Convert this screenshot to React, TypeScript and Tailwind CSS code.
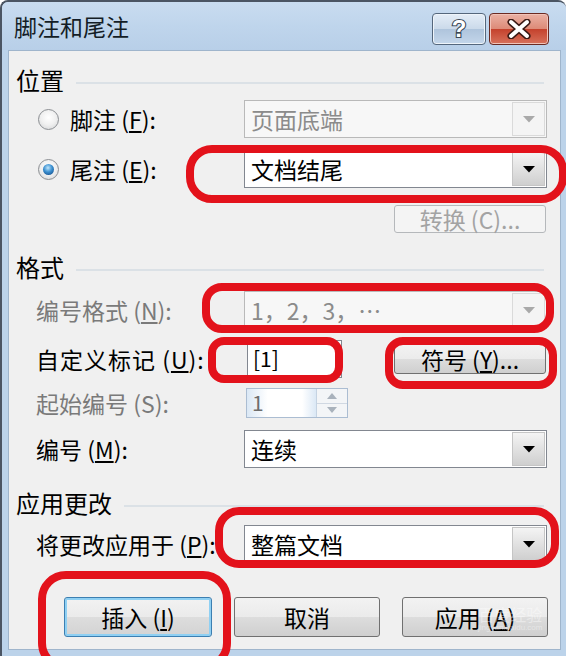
import React from "react";

const FONT = "font-['Noto_Sans_CJK_SC','Noto_Sans',sans-serif]";

function Arrow({ disabled }: { disabled?: boolean }) {
  return (
    <svg width="14" height="8" viewBox="0 0 14 8">
      <path d="M1 1h12L7 7.5z" fill={disabled ? "#a9a9a9" : "#000"} />
    </svg>
  );
}

function Combo({ text, disabled }: { text: string; disabled?: boolean }) {
  return (
    <div
      className={
        "ml-auto mr-[13px] flex h-full w-[303px] border " +
        (disabled ? "border-[#b9b9b9] bg-[#f7f7f7]" : "border-[#828790] bg-white")
      }
    >
      <div
        className={
          "flex flex-1 items-center pl-[6px] text-[23px] " +
          (disabled ? "text-[#8b8b8b]" : "text-black")
        }
      >
        {text}
      </div>
      <div
        className={
          "m-[1px] flex w-[33px] items-center justify-center " +
          (disabled
            ? "border border-[#dadada] bg-[#f4f4f4]"
            : "border border-[#c5c5c5] bg-gradient-to-b from-[#f4f4f4] to-[#cfcfcf]")
        }
      >
        <Arrow disabled={disabled} />
      </div>
    </div>
  );
}

function Heading({ text, lineClass }: { text: string; lineClass: string }) {
  return (
    <div className="flex h-[32px] items-center pl-[7px] pr-[16px]">
      <span className="text-[24px] leading-none text-black">{text}</span>
      <div className={"mt-[5px] h-[2px] flex-1 bg-[#dbe1e6] " + lineClass} />
    </div>
  );
}

function Radio({ checked }: { checked?: boolean }) {
  return (
    <div className="flex h-[21px] w-[21px] items-center justify-center rounded-full border border-[#8c8f93] bg-[radial-gradient(circle_at_50%_40%,#ffffff_0%,#f0f0f0_50%,#cfd1d3_100%)]">
      {checked && (
        <div className="h-[11px] w-[11px] rounded-full bg-[radial-gradient(circle_at_45%_35%,#bfe6fb_0%,#3a8fd0_45%,#0f3f7a_100%)]" />
      )}
    </div>
  );
}

function Btn({
  children,
  className,
  def,
  disabled,
}: {
  children: React.ReactNode;
  className: string;
  def?: boolean;
  disabled?: boolean;
}) {
  let look =
    "border-[#707070] bg-[linear-gradient(#f2f2f2_0%,#ebebeb_49%,#dddddd_50%,#cfcfcf_100%)] text-black";
  if (def)
    look =
      "border-[#3c7fb1] bg-[linear-gradient(#f2f2f2_0%,#ebebeb_49%,#dddddd_50%,#d3d3d3_100%)] shadow-[inset_0_0_0_2px_#8fd0f3] text-black";
  if (disabled) look = "border-[#b5b8bb] bg-[#f4f4f4] text-[#a3a3a3]";
  return (
    <div
      className={
        "flex items-center justify-center rounded-[3px] border text-[23px] " + look + " " + className
      }
    >
      {children}
    </div>
  );
}

export default function App() {
  return (
    <div
      className={
        "relative h-[656px] w-[566px] overflow-hidden rounded-tl-[8px] rounded-tr-[8px] border-l-[2px] border-t-[2px] border-[#4b5563] bg-[#bcd3ea] " +
        FONT
      }
    >
      {/* title bar */}
      <div className="relative flex h-[48px] items-center bg-gradient-to-b from-[#c9dcf0] via-[#bfd5ec] to-[#b8cfe8] pl-[12px]">
        <span className="text-[23px] text-[#141d26]">脚注和尾注</span>
        <div className="absolute left-[430px] top-[11px] flex h-[32px] w-[54px] items-center justify-center rounded-[4px] border border-[#55677c] bg-[linear-gradient(#e4edf7_0%,#cbdaea_49%,#aec4dc_50%,#c4d6ea_100%)] shadow-[inset_0_0_0_1px_#eef4fa]">
          <svg width="30" height="26" viewBox="0 0 30 26">
            <text
              x="15"
              y="21"
              textAnchor="middle"
              fontSize="24"
              fontWeight="bold"
              fontFamily="Liberation Sans, sans-serif"
              fill="#fff"
              stroke="#3a4856"
              strokeWidth="2.2"
              paintOrder="stroke"
            >
              ?
            </text>
          </svg>
        </div>
        <div className="absolute left-[487px] top-[11px] flex h-[32px] w-[60px] items-center justify-center rounded-[4px] border border-[#6b2a22] bg-[linear-gradient(#eab1a4_0%,#dd8b78_49%,#c4412c_50%,#d7715b_100%)] shadow-[inset_0_0_0_1px_#f1c3b8]">
          <svg width="26" height="20" viewBox="0 0 26 20">
            <path
              d="M5 3 L21 17 M21 3 L5 17"
              stroke="#3b1a15"
              strokeWidth="7"
              strokeLinecap="round"
            />
            <path
              d="M5 3 L21 17 M21 3 L5 17"
              stroke="#ffffff"
              strokeWidth="4"
              strokeLinecap="round"
            />
          </svg>
        </div>
      </div>

      {/* body */}
      <div className="flex h-[600px]">
        <div className="w-[6px]" />
        <div className="flex flex-1 flex-col border border-[#9fb5cc] bg-[#f0f0f0] pt-[13px] text-black">
          <Heading text="位置" lineClass="ml-[12px]" />

          <div className="mt-[4px] flex h-[38px] items-center pl-[29px]">
            <Radio />
            <span className="ml-[11px] text-[23px]">
              脚注 (<span className="underline">F</span>):
            </span>
            <Combo text="页面底端" disabled />
          </div>

          <div className="mt-[12px] flex h-[38px] items-center pl-[29px]">
            <Radio checked />
            <span className="ml-[11px] text-[23px]">
              尾注 (<span className="underline">E</span>):
            </span>
            <Combo text="文档结尾" />
          </div>

          <div className="mt-[17px] flex h-[28px] justify-end pr-[14px]">
            <Btn disabled className="w-[152px]">
              转换 (C)...
            </Btn>
          </div>

          <div className="mt-[18px]">
            <Heading text="格式" lineClass="ml-[12px]" />
          </div>

          <div className="mt-[8px] flex h-[38px] items-center pl-[27px]">
            <span className="text-[23px] text-[#7a7a7a]">
              编号格式 (<span className="underline">N</span>):
            </span>
            <Combo text="1，2，3，…" disabled />
          </div>

          <div className="mt-[11px] flex h-[38px] items-center pl-[27px]">
            <span className="text-[23px] tracking-[1px]">
              自定义标记 (<span className="underline">U</span>):
            </span>
            <div className="ml-auto flex h-full w-[95px] items-center border border-[#828790] bg-white pl-[5px] text-[21px]">
              [1]
            </div>
            <Btn className="ml-[52px] mr-[14px] h-[30px] w-[152px]">
              符号 (<span className="underline">Y</span>)...
            </Btn>
          </div>

          <div className="mt-[10px] flex h-[30px] items-center pl-[27px]">
            <span className="text-[23px] text-[#7a7a7a]">起始编号 (S):</span>
            <div className="ml-auto mr-[212px] flex h-full w-[102px] border border-[#abbdd2] bg-white">
              <div className="flex flex-1 items-center border-r border-[#c5d3e2] bg-[linear-gradient(90deg,#dbe8f5_0%,#ffffff_30%,#ffffff_80%,#dbe8f5_100%)] pl-[5px] text-[21px] text-[#6d6d6d]">
                1
              </div>
              <div className="flex w-[30px] flex-col">
                <div className="flex flex-1 items-center justify-center border-b border-[#d0d8e2] bg-[#f3f5f7]">
                  <svg width="10" height="6" viewBox="0 0 10 6">
                    <path d="M0 6h10L5 0z" fill="#a9b2bc" />
                  </svg>
                </div>
                <div className="flex flex-1 items-center justify-center bg-[#f3f5f7]">
                  <svg width="10" height="6" viewBox="0 0 10 6">
                    <path d="M0 0h10L5 6z" fill="#a9b2bc" />
                  </svg>
                </div>
              </div>
            </div>
          </div>

          <div className="mt-[12px] flex h-[38px] items-center pl-[27px]">
            <span className="text-[23px]">
              编号 (<span className="underline">M</span>):
            </span>
            <Combo text="连续" />
          </div>

          <div className="mt-[19px]">
            <Heading text="应用更改" lineClass="ml-[12px]" />
          </div>

          <div className="mt-[6px] flex h-[38px] items-center pl-[27px]">
            <span className="text-[23px]">
              将更改应用于 (<span className="underline">P</span>):
            </span>
            <Combo text="整篇文档" />
          </div>

          <div className="mt-[34px] flex h-[40px] pl-[55px]">
            <Btn def className="w-[148px]">
              插入 (<span className="underline">I</span>)
            </Btn>
            <Btn className="ml-[22px] w-[146px]">取消</Btn>
            <Btn className="ml-[22px] w-[146px]">
              应用 (<span className="underline">A</span>)
            </Btn>
          </div>
        </div>
        <div className="w-[5px]" />
      </div>

      {/* watermark */}
      <div className="pointer-events-none absolute left-[476px] top-[603px] flex flex-col items-center text-white opacity-40">
        <span className="text-[16px] leading-[18px]">百度经验</span>
        <span className="font-['Liberation_Sans',sans-serif] text-[8px] leading-[9px]">jingyan.baidu.com</span>
      </div>

      {/* red annotations */}
      <div className="pointer-events-none absolute left-[184px] top-[143px] h-[58px] w-[381px] rounded-[26px] border-[8px] border-[#e3121b]" />
      <div className="pointer-events-none absolute left-[200px] top-[281px] h-[50px] w-[352px] rounded-[20px] border-[8px] border-[#e3121b]" />
      <div className="pointer-events-none absolute left-[206px] top-[335px] h-[46px] w-[135px] rounded-[16px] border-[8px] border-[#e3121b]" />
      <div className="pointer-events-none absolute left-[383px] top-[335px] h-[52px] w-[172px] rounded-[18px] border-[8px] border-[#e3121b]" />
      <div className="pointer-events-none absolute left-[213px] top-[505px] h-[61px] w-[344px] rounded-[24px] border-[8px] border-[#e3121b]" />
      <div className="pointer-events-none absolute left-[36px] top-[569px] h-[100px] w-[193px] rounded-[28px] border-[8px] border-[#e3121b]" />
    </div>
  );
}
